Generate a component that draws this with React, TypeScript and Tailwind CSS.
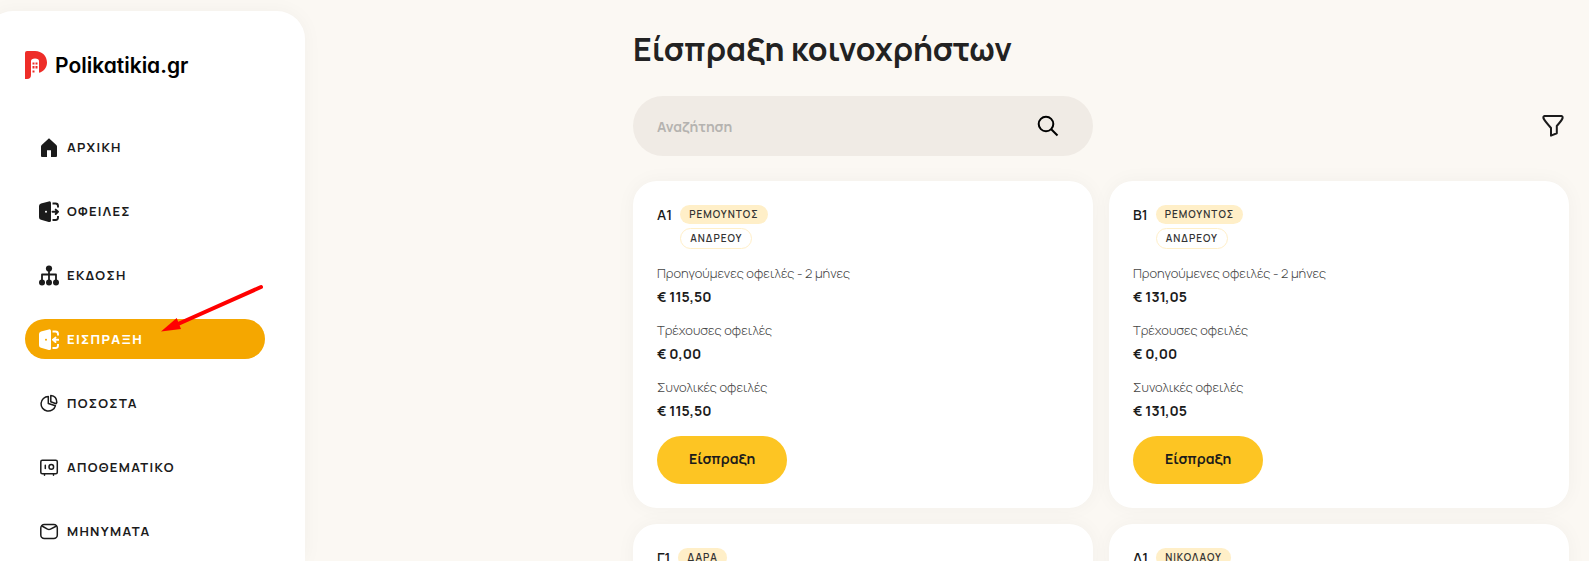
import { ReactNode, useState } from "react";

type IconProps = { children: ReactNode };

const Icon = ({ children }: IconProps) => (
  <svg
    viewBox="0 0 20 22"
    className="h-[22px] w-5 shrink-0"
    fill="none"
    stroke="currentColor"
    strokeWidth="1.5"
    strokeLinecap="round"
    strokeLinejoin="round"
    aria-hidden="true"
  >
    {children}
  </svg>
);

const HomeIcon = () => (
  <Icon>
    <path
      d="M10 1.3 L17.3 8 Q18 8.7 18 9.5 V19 Q18 20 17 20 H12 V13.2 H8 V20 H3 Q2 20 2 19 V9.5 Q2 8.7 2.7 8 Z"
      fill="currentColor"
      stroke="none"
    />
  </Icon>
);

const DoorIcon = ({ inward }: { inward?: boolean }) => (
  <Icon>
    <path
      d="M9.8 .4 Q12 0 12 2 V19.4 Q12 21.4 9.8 21 L2 18.8 Q0 18.2 0 16.2 V5 Q0 3 2 2.4 Z M7 9.8 a.9 .9 0 1 0 .01 0 Z"
      fill="currentColor"
      fillRule="evenodd"
      stroke="none"
    />
    <path
      d="M13.5 2.5 H16.5 Q19 2.5 19 5 V6.5 M19 15 V16.5 Q19 19 16.5 19 H13.5"
      strokeWidth="1.9"
      strokeLinecap="butt"
    />
    <path
      d={
        inward
          ? "M19.5 10.8 H14 M16.5 8.6 L14 10.8 L16.5 13"
          : "M13.5 10.8 H19 M16.7 8.6 L19 10.8 L16.7 13"
      }
      strokeWidth="1.9"
    />
  </Icon>
);

const TreeIcon = () => (
  <Icon>
    <g fill="currentColor" stroke="none">
      <circle cx="10" cy="3.5" r="3.1" />
      <circle cx="3" cy="17.5" r="3" />
      <circle cx="10" cy="17.5" r="3" />
      <circle cx="17" cy="17.5" r="3" />
    </g>
    <path d="M10 4.5 V17 M3 17 V9.5 H17 V17" strokeWidth="1.8" />
  </Icon>
);

const PieIcon = () => (
  <Icon>
    <path d="M9.3 3.5 A7.3 7.3 0 1 0 16.4 12.7 L9.3 10.5 Z" />
    <path d="M11.8 2.5 Q17.8 3 17.8 9.5 L17.1 10.7 L11.8 8.8 Z" />
  </Icon>
);

const SafeIcon = () => (
  <Icon>
    <rect x="1.8" y="3.2" width="16.5" height="13.5" rx="1.5" />
    <circle cx="12.3" cy="9.9" r="2.3" />
    <path d="M6.3 8.2 V11.6 M5.5 17.2 V18.2 M14.5 17.2 V18.2" />
  </Icon>
);

const MailIcon = () => (
  <Icon>
    <rect x="1.8" y="3.5" width="16.5" height="14" rx="3.5" />
    <path d="M3 5 L8.5 8.1 Q10 8.9 11.5 8.1 L17.5 5" />
  </Icon>
);

const menu = [
  { label: "ΑΡΧΙΚΗ", icon: <HomeIcon /> },
  { label: "ΟΦΕΙΛΕΣ", icon: <DoorIcon /> },
  { label: "ΕΚΔΟΣΗ", icon: <TreeIcon /> },
  { label: "ΕΙΣΠΡΑΞΗ", icon: <DoorIcon inward />, active: true },
  { label: "ΠΟΣΟΣΤΑ", icon: <PieIcon /> },
  { label: "ΑΠΟΘΕΜΑΤΙΚΟ", icon: <SafeIcon /> },
  { label: "ΜΗΝΥΜΑΤΑ", icon: <MailIcon /> },
];

type Apartment = {
  code: string;
  owner: string;
  tenant?: string;
  amounts?: { label: string; value: string }[];
};

const apartments: Apartment[] = [
  {
    code: "Α1",
    owner: "ΡΕΜΟΥΝΤΟΣ",
    tenant: "ΑΝΔΡΕΟΥ",
    amounts: [
      { label: "Προηγούμενες οφειλές - 2 μήνες", value: "115,50" },
      { label: "Τρέχουσες οφειλές", value: "0,00" },
      { label: "Συνολικές οφειλές", value: "115,50" },
    ],
  },
  {
    code: "Β1",
    owner: "ΡΕΜΟΥΝΤΟΣ",
    tenant: "ΑΝΔΡΕΟΥ",
    amounts: [
      { label: "Προηγούμενες οφειλές - 2 μήνες", value: "131,05" },
      { label: "Τρέχουσες οφειλές", value: "0,00" },
      { label: "Συνολικές οφειλές", value: "131,05" },
    ],
  },
  { code: "Γ1", owner: "ΔΑΡΑ" },
  { code: "Δ1", owner: "ΝΙΚΟΛΑΟΥ" },
];

const Logo = () => (
  <a href="#" className="flex h-7 items-center gap-2 text-black">
    <svg viewBox="0 0 22 28" className="h-7 w-[22px]" aria-hidden="true">
      <path
        d="M2 0 H10 C17 0 22 5 22 11.5 C22 16.5 19 20.5 14 21.8 V10 Q14 7.5 10 7.5 Q6 7.5 6 10 V24 Q6 28 2 28 H0 V2 Q0 0 2 0 Z"
        fill="#ee2d28"
      />
      <path
        d="M7.5 11.5 h2 v2 h-2 Z M10.5 11.5 h2 v2 h-2 Z M7.5 15 h2 v2.5 h-2 Z M10.5 15 h2 v2.5 h-2 Z M7.5 19.5 h2 v2 h-2 Z"
        fill="#ee2d28"
      />
    </svg>
    <span className="pt-0.5 font-[Inter] text-[21px] leading-7 font-semibold [font-feature-settings:'cv11']">
      Polikatikia.gr
    </span>
  </a>
);

const ApartmentCard = ({ item }: { item: Apartment }) => (
  <article className="rounded-3xl bg-white p-6 shadow-[0_0_20px_rgba(0,0,0,0.04)]">
    <div className="flex gap-2">
      <h2 className="text-sm leading-5 font-semibold">{item.code}</h2>
      <div className="flex flex-col items-start gap-1 text-[10px] font-semibold tracking-[1px] text-[#333]">
        <span className="rounded-full bg-[#ffefc8] px-[9px] leading-[19px]">
          {item.owner}
        </span>
        {item.tenant && (
          <span className="rounded-full border border-[#ffefc8] px-[9px] leading-[19px]">
            {item.tenant}
          </span>
        )}
      </div>
    </div>
    {item.amounts && (
      <dl className="mt-3.5 flex flex-col gap-[9px]">
        {item.amounts.map(({ label, value }) => (
          <div key={label}>
            <dt className="text-[13px] leading-5 font-light text-[#444]">
              {label}
            </dt>
            <dd className="text-sm leading-7 font-bold">€ {value}</dd>
          </div>
        ))}
      </dl>
    )}
    <button
      type="button"
      className="mt-[11px] h-12 rounded-full bg-[#fdc523] px-8 pb-0.5 text-sm font-bold"
    >
      Είσπραξη
    </button>
  </article>
);

const App = () => {
  const [search, setSearch] = useState("");

  return (
    <div className="relative flex h-screen overflow-hidden bg-[#fbf8f3] font-['Manrope',Inter,sans-serif] text-[#1b1b1b]">
      <aside className="mt-[11px] -ml-[15px] w-80 shrink-0 rounded-t-[28px] bg-white px-10 pt-10 shadow-[0_0_20px_rgba(0,0,0,0.04)]">
        <Logo />
        <nav className="mt-12 flex flex-col gap-6">
          {menu.map((item) => (
            <a
              key={item.label}
              href="#"
              className={
                item.active
                  ? "flex h-10 items-center gap-2 rounded-full bg-[#f5a700] px-3.5 pt-0.5 text-[13px] font-extrabold tracking-widest text-white"
                  : "flex h-10 items-center gap-2 rounded-full px-3.5 pt-0.5 text-[13px] font-bold tracking-widest"
              }
            >
              {item.icon}
              {item.label}
            </a>
          ))}
        </nav>
      </aside>

      <main className="min-w-0 flex-1 pt-7 pr-5 pl-[328px]">
        <h1 className="text-[32px] leading-[42px] font-bold text-[#222]">
          Είσπραξη κοινοχρήστων
        </h1>
        <div className="mt-[26px] grid grid-cols-2 items-center gap-4">
          <label className="flex h-[60px] items-center rounded-full bg-[#f0ebe5] pr-[33px] pl-6">
            <input
              type="text"
              value={search}
              onChange={(e) => setSearch(e.target.value)}
              placeholder="Αναζήτηση"
              aria-label="Αναζήτηση"
              className="min-w-0 flex-1 bg-transparent pt-0.5 text-sm font-bold outline-none placeholder:text-[#b5b3b0]"
            />
            <svg
              viewBox="0 0 24 24"
              className="h-6 w-6 text-black"
              fill="none"
              stroke="currentColor"
              strokeWidth="2"
              aria-hidden="true"
            >
              <circle cx="10" cy="10" r="7.3" />
              <path d="M15.2 15.2 L21.5 21.5" />
            </svg>
          </label>
          <button type="button" aria-label="Φίλτρα" className="mr-1 justify-self-end">
            <svg
              viewBox="0 0 24 24"
              className="h-6 w-6"
              fill="none"
              stroke="currentColor"
              strokeWidth="2"
              strokeLinejoin="round"
              aria-hidden="true"
            >
              <path d="M3.6 2 H20.4 Q22 2.4 21.5 4.4 Q21 6 15.8 12 V19.3 L10 21.6 V14 Q3 6 2.5 4.4 Q2 2.4 3.6 2 Z" />
            </svg>
          </button>
        </div>
        <div className="mt-[25px] grid grid-cols-2 gap-4">
          {apartments.map((item) => (
            <ApartmentCard key={item.code} item={item} />
          ))}
        </div>
      </main>

      {/* pointer to the active menu entry */}
      <svg
        viewBox="0 0 104 50"
        className="pointer-events-none absolute top-[284px] left-40 h-[50px] w-[104px]"
        aria-hidden="true"
      >
        <path d="M18 40 L101 3" stroke="#f00" strokeWidth="4" strokeLinecap="round" />
        <path d="M1 47.5 L16.7 34 L21 45 Z" fill="#f00" />
      </svg>
    </div>
  );
};

export default App;
